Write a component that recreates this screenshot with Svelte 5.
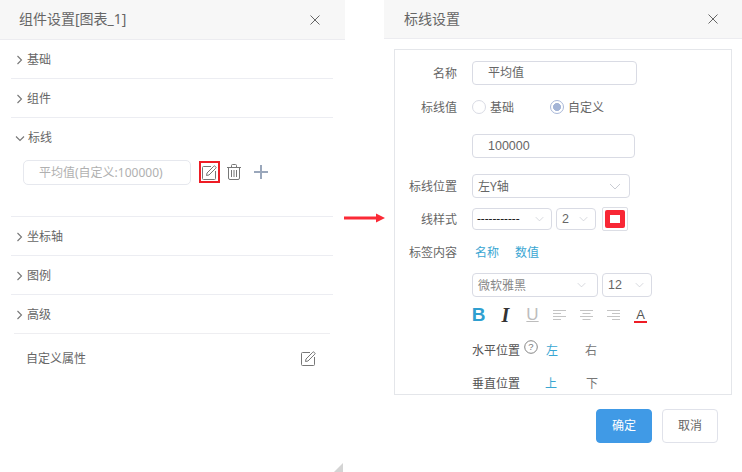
<script>
  const closedTop = ['基础', '组件'];
  const closedBottom = ['坐标轴', '图例', '高级'];
</script>

{#snippet chevron()}
  <svg class="chev" width="8" height="10" viewBox="0 0 8 10"><path d="M1.5 1 5.500 5 1.500 9" fill="none" stroke="#777" stroke-width="1.100"/></svg>
{/snippet}
{#snippet close()}
  <svg class="close" width="10" height="10" viewBox="0 0 10 10"><path d="M.5.5l9 9M9.500.5l-9 9" stroke="#666" stroke-width="1"/></svg>
{/snippet}
{#snippet caret()}
  <svg class="caret" width="12" height="7" viewBox="0 0 12 7"><path d="M1 1 6 6 11 1" fill="none" stroke="#c9ccd3" stroke-width="1"/></svg>
{/snippet}
{#snippet edit()}
  <svg width="15" height="15" viewBox="0 0 15 15" fill="none" stroke="#777"><path d="M9 1.500H1.500a1 1 0 0 0-1 1v11a1 1 0 0 0 1 1h11a1 1 0 0 0 1-1V6"/><path d="M4.500 10.500 5 8 11.800 1.200a.9.900 0 0 1 1.300 0l.7.7a.9.900 0 0 1 0 1.300L7 10z"/></svg>
{/snippet}
{#snippet lines(kind)}
  <svg width="13" height="12" viewBox="0 0 13 12" stroke="#c4c4c4" stroke-width="1">
    <path d="M0 1.500H13"/>
    <path d={kind === 'l' ? 'M0 4.500H8' : kind === 'c' ? 'M2.500 4.500H10.500' : 'M5 4.500H13'}/>
    <path d="M0 7.500H13"/>
    <path d={kind === 'l' ? 'M0 10.500H8' : kind === 'c' ? 'M2.500 10.500H10.500' : 'M5 10.500H13'}/>
  </svg>
{/snippet}

<div class="page">
  <section class="left">
    <header class="head">
      <span>组件设置[图表_1]</span>
      {@render close()}
    </header>
    <div class="list">
      {#each closedTop as name}
        <div class="row">{@render chevron()}<span>{name}</span></div>
      {/each}
      <div class="open">
        <div class="open-head">
          <svg class="chev down" width="10" height="8" viewBox="0 0 10 8"><path d="M1 1.500 5 5.500 9 1.500" fill="none" stroke="#777" stroke-width="1.100"/></svg>
          <span>标线</span>
        </div>
        <div class="line-item">
          <div class="pill">平均值(自定义:100000)</div>
          <button class="icon red">{@render edit()}</button>
          <button class="icon trash">
            <svg width="14" height="16" viewBox="0 0 14 16" fill="none" stroke="#777"><path d="M0 3.500H14M4.500 3.500V1.500a1 1 0 0 1 1-1h3a1 1 0 0 1 1 1v2M1.500 3.500V14a1.500 1.500 0 0 0 1.500 1.500h8a1.500 1.500 0 0 0 1.500-1.500V3.500M4.500 6v7M7 6v7M9.500 6v7"/></svg>
          </button>
          <button class="icon plus">
            <svg width="14" height="14" viewBox="0 0 14 14"><path d="M7 0v14M0 7h14" stroke="#9aa7bb" stroke-width="2"/></svg>
          </button>
        </div>
      </div>
      {#each closedBottom as name}
        <div class="row">{@render chevron()}<span>{name}</span></div>
      {/each}
      <div class="custom">
        <span>自定义属性</span>
        {@render edit()}
      </div>
    </div>
    <div class="grip"></div>
  </section>

  <div class="arrow">
    <svg width="41" height="10" viewBox="0 0 41 10"><path d="M0 5H33" stroke="#fb2a36" stroke-width="3"/><path d="M32 .5 41 5l-9 4.500z" fill="#fb2a36"/></svg>
  </div>

  <section class="right">
    <header class="head rhead">
      <span>标线设置</span>
      {@render close()}
    </header>
    <div class="box">
      <div class="form">
        <div class="f f1">
          <label>名称</label>
          <div class="input w165">平均值</div>
        </div>
        <div class="f f2">
          <label>标线值</label>
          <span class="radio"></span><span class="rtext first">基础</span>
          <span class="radio on"></span><span class="rtext">自定义</span>
        </div>
        <div class="f f3 indent">
          <div class="input w163 digits">100000</div>
        </div>
        <div class="f f4">
          <label>标线位置</label>
          <div class="select w158"><span>左Y轴</span>{@render caret()}</div>
        </div>
        <div class="f f5">
          <label>线样式</label>
          <div class="select w80 small"><span class="dash">-----------</span>{@render caret()}</div>
          <div class="select w40 small"><span class="num">2</span>{@render caret()}</div>
          <div class="swatch"><i></i></div>
        </div>
        <div class="f f6">
          <label>标签内容</label>
          <span class="link a">名称</span>
          <span class="link b">数值</span>
        </div>
        <div class="f f7 indent">
          <div class="select w126 grey"><span>微软雅黑</span>{@render caret()}</div>
          <div class="select w50 small"><span class="num">12</span>{@render caret()}</div>
        </div>
        <div class="f f8 tools">
          <span class="tool b-btn">B</span>
          <span class="tool i-btn">I</span>
          <span class="tool u-btn">U</span>
          <span class="tool">{@render lines('l')}</span>
          <span class="tool">{@render lines('c')}</span>
          <span class="tool">{@render lines('r')}</span>
          <span class="tool a-btn"><b>A</b></span>
        </div>
        <div class="f f9 indent pos">
          <span class="plabel">水平位置</span>
          <svg class="help" width="14" height="14" viewBox="0 0 14 14"><circle cx="7" cy="7" r="6.300" fill="none" stroke="#777" stroke-width=".9"/><text x="7" y="10.300" text-anchor="middle" font-size="9.500" fill="#777" font-family="Liberation Sans">?</text></svg>
          <span class="link p1">左</span>
          <span class="p2">右</span>
        </div>
        <div class="f f10 indent pos">
          <span class="plabel">垂直位置</span>
          <span class="link p3">上</span>
          <span class="p2 p4">下</span>
        </div>
      </div>
    </div>
    <footer class="foot">
      <button class="btn ok">确定</button>
      <button class="btn">取消</button>
    </footer>
  </section>
</div>

<style>
  :global(body) { margin: 0; background: #fff; }
  .page {
    display: flex; width: 742px; height: 472px; overflow: hidden; background: #fff;
    font: 12px/1.2 "Noto Sans", "Noto Sans CJK SC", sans-serif; color: #666;
  }
  .left { position: relative; width: 345px; height: 472px; flex: none; }
  .head {
    display: flex; align-items: center; justify-content: space-between; box-sizing: border-box;
    height: 40px; padding: 0 25px 0 19px; background: #f7f7f7; border-bottom: 1px solid #ececf0;
    font-size: 14px; color: #666;
  }
  .close { flex: none; }
  .list { padding: 0 12px 0 11px; }
  .row {
    display: flex; align-items: center; height: 39px; box-sizing: border-box;
    border-bottom: 1px solid #ecedf2; padding: 2px 0 0 5px;
  }
  .row span, .open-head span { margin-left: 3px; color: #666; }
  .list > .row:nth-last-child(2) { height: 38px; border-bottom: 0; }
  .chev { flex: none; }
  .open { height: 99px; box-sizing: border-box; border-bottom: 1px solid #ecedf2; }
  .open-head { display: flex; align-items: center; height: 39px; padding: 2px 0 0 4px; box-sizing: border-box; }
  .line-item { display: flex; align-items: center; margin: 3px 0 0 12px; height: 24px; }
  .pill {
    box-sizing: border-box; width: 168px; height: 25px; line-height: 23px; padding-left: 15px;
    border: 1px solid #e6e8ee; border-radius: 5px; color: #b0b0b0;
  }
  .icon { display: flex; align-items: center; justify-content: center; padding: 0; border: 0; background: none; }
  .red { box-sizing: border-box; width: 21px; height: 22px; margin-left: 8px; border: 2px solid #ee1c25; }
  .trash { margin-left: 7px; }
  .plus { margin-left: 13px; }
  .custom {
    display: flex; align-items: center; justify-content: space-between; height: 50px;
    margin: 0 0 0 3px; padding: 0 14px 0 12px; width: 316px; box-sizing: border-box;
    border-top: 1px solid #eeeef1;
  }
  .custom span { padding-top: 2px; }
  .grip {
    position: absolute; right: 2px; bottom: 0; width: 9px; height: 9px;
    background: #d4d4d4; clip-path: polygon(100% 0, 100% 100%, 0 100%);
  }
  .arrow { width: 41px; margin: 0 -1px 0 -1px; padding-top: 213px; position: relative; flex: none; }
  .arrow svg { display: block; }
  .right { width: 358px; flex: none; }
  .rhead { height: 39px; padding: 0 24px 0 20px; margin-bottom: 10px; }
  .box {
    box-sizing: border-box; width: 338px; height: 346px; margin-left: 10px;
    border: 1px solid #e4e6ea; overflow: hidden;
  }
  .form { padding-top: 11px; }
  .f { display: flex; align-items: center; height: 24px; }
  label { width: 62px; margin-right: 15px; text-align: right; flex: none; color: #666; padding-top: 2px; }
  .indent { padding-left: 77px; }
  .f2 { margin-top: 10px; }
  .f3 { margin-top: 15px; }
  .f4 { margin-top: 16px; }
  .f5 { margin-top: 9px; }
  .f6 { margin-top: 9px; }
  .f7 { margin-top: 9px; }
  .f8 { margin-top: 6px; }
  .f9 { margin-top: 11px; }
  .f10 { margin-top: 9px; }
  .input, .select {
    box-sizing: border-box; height: 24px; border: 1px solid #d9dbe4; border-radius: 4px; flex: none;
  }
  .input { padding-left: 15px; line-height: 22px; color: #666; }
  .digits { font: 12.5px/22px "Liberation Sans", sans-serif; }
  .w165 { width: 165px; }
  .w163 { width: 163px; }
  .select { display: flex; align-items: center; justify-content: space-between; padding: 0 8px 0 5px; color: #666; }
  .select span { padding-top: 2px; }
  .w158 { width: 158px; }
  .w80 { width: 80px; height: 22px; margin-right: 4px; }
  .w40 { width: 40px; height: 22px; margin-right: 6px; }
  .w126 { width: 126px; margin-right: 4px; }
  .w50 { width: 50px; }
  .small { padding-right: 7px; }
  .small .caret { width: 9px; height: 6px; }
  .grey span { color: #888; }
  .grey .caret { width: 9px; height: 6px; margin-right: 3px; }
  .select .dash { padding: 0; margin-left: -1px; color: #222; }
  .select .num { padding-top: 0; font: 12.5px "Liberation Sans", sans-serif; }
  .swatch {
    box-sizing: border-box; display: flex; align-items: center; justify-content: center;
    width: 26px; height: 24px; border: 1px solid #dcdee5; border-radius: 2px;
  }
  .swatch i { box-sizing: border-box; display: block; width: 20px; height: 18px; background: #fff; border: 5px solid #f82735; border-radius: 2px; }
  .radio {
    box-sizing: border-box; width: 14px; height: 14px; border: 1px solid #d9dbe4; border-radius: 50%; flex: none;
  }
  .radio.on { border-color: #a9b8d8; background: radial-gradient(circle, #a3b4d6 0 3.700px, #fff 4.300px); }
  .rtext { margin-left: 4px; padding-top: 2px; }
  .rtext.first { width: 60px; }
  .link { color: #3aa6d2; padding-top: 2px; }
  .link.a { margin-left: 3px; }
  .link.b { margin-left: 16px; }
  .tools { padding-left: 70px; }
  .tool { display: flex; align-items: center; justify-content: center; width: 27px; height: 24px; flex: none; }
  .b-btn { font: 700 19px "Liberation Sans", sans-serif; color: #2f9fd0; }
  .i-btn { font: italic 700 20px "Liberation Serif", serif; color: #333; }
  .u-btn { font: 400 17px "Liberation Sans", sans-serif; color: #bdbdbd; text-decoration: underline; }
  .a-btn b { font: 400 13px/13px "Liberation Sans", sans-serif; color: #555; border-bottom: 2px solid #ee1c25; padding: 0 2px; }
  .pos { color: #555; }
  .plabel { width: 48px; flex: none; padding-top: 2px; }
  .help { margin: -7px 0 0 4px; flex: none; }
  .p1 { margin-left: 8px; }
  .p2 { margin-left: 27px; color: #777; padding-top: 2px; }
  .p3 { margin-left: 25px; }
  .p4 { margin-left: 29px; }
  .foot { display: flex; margin: 14px 0 0 212px; gap: 10px; }
  .btn {
    box-sizing: border-box; width: 56px; height: 34px; padding: 0; border: 1px solid #e0e2ea; border-radius: 4px;
    background: #fff; color: #666; font: inherit;
  }
  .ok { background: #409ae6; border-color: #409ae6; color: #fff; }
</style>
